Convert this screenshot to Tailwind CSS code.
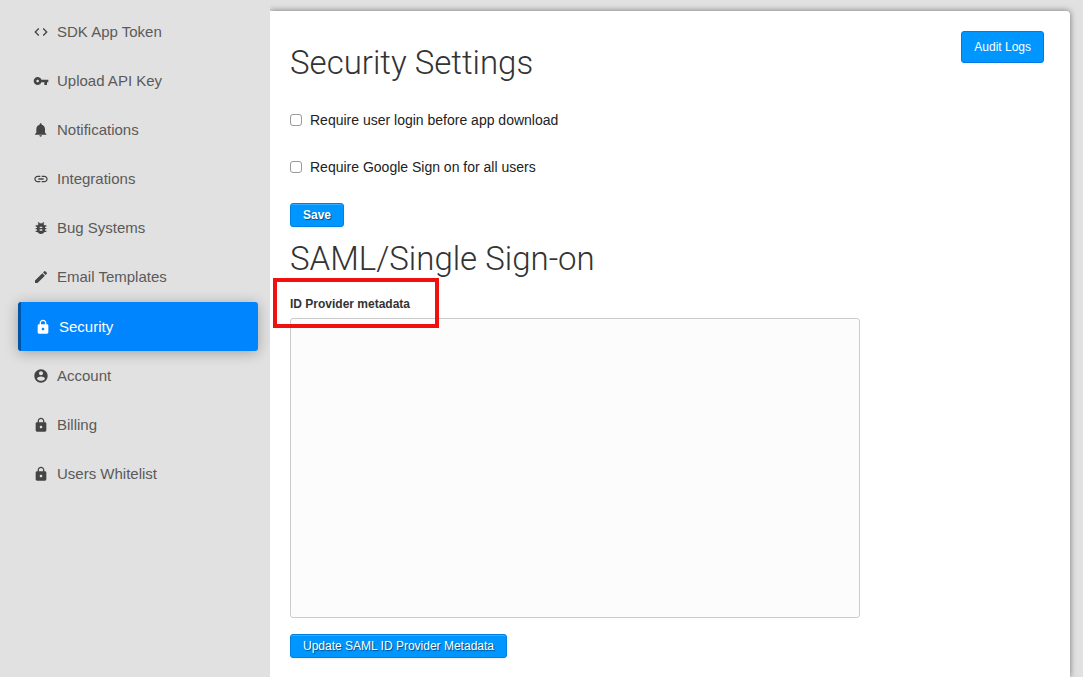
<!DOCTYPE html>
<html lang="en">
<head>
<meta charset="utf-8">
<meta name="viewport" content="width=device-width, initial-scale=1">
<title>Security Settings</title>
<script src="https://cdn.jsdelivr.net/npm/@tailwindcss/browser@4"></script>
</head>
<body class="bg-[#e1e1e1] font-['Liberation_Sans',Arial,sans-serif] text-[#333]">
<div class="flex min-h-screen overflow-hidden">
  <nav aria-label="Settings" class="z-10 w-[270px] shrink-0 overflow-hidden bg-[#e1e1e1] pt-[7px] pr-3 pl-[18px] text-[15px] leading-[25px] text-[#5a5a5a]">
    <a href="#" class="flex h-[49px] items-center gap-2 pl-[15px]"><svg class="size-4 fill-[#444]" viewBox="0 0 24 24" aria-hidden="true"><path d="M9.4 16.6 4.8 12l4.6-4.6L8 6l-6 6 6 6 1.4-1.4zm5.2 0 4.6-4.6-4.6-4.6L16 6l6 6-6 6-1.4-1.4z"/></svg>SDK App Token</a>
    <a href="#" class="flex h-[49px] items-center gap-2 pl-[15px]"><svg class="size-4 fill-[#444]" viewBox="0 0 24 24" aria-hidden="true"><path d="M12.65 10C11.83 7.67 9.61 6 7 6c-3.31 0-6 2.69-6 6s2.69 6 6 6c2.61 0 4.83-1.67 5.65-4H17v4h4v-4h2v-4H12.65zM7 14c-1.1 0-2-.9-2-2s.9-2 2-2 2 .9 2 2-.9 2-2 2z"/></svg>Upload API Key</a>
    <a href="#" class="flex h-[49px] items-center gap-2 pl-[15px]"><svg class="size-4 fill-[#444]" viewBox="0 0 24 24" aria-hidden="true"><path d="M11.5 22c1.1 0 2-.9 2-2h-4c0 1.1.9 2 2 2zm6.5-6v-5.5c0-3.07-2.13-5.64-5-6.32V3.5c0-.83-.67-1.5-1.500-1.500S10 2.67 10 3.5v.68c-2.87.68-5 3.25-5 6.320V16l-2 2v1h17v-1l-2-2z"/></svg>Notifications</a>
    <a href="#" class="flex h-[49px] items-center gap-2 pl-[15px]"><svg class="size-4 fill-[#444]" viewBox="0 0 24 24" aria-hidden="true"><path d="M3.9 12c0-1.71 1.39-3.1 3.1-3.1h4V7H7c-2.76 0-5 2.24-5 5s2.24 5 5 5h4v-1.900H7c-1.710 0-3.100-1.390-3.100-3.100zM8 13h8v-2H8v2zm9-6h-4v1.900h4c1.710 0 3.100 1.390 3.100 3.100s-1.390 3.100-3.100 3.100h-4V17h4c2.760 0 5-2.240 5-5s-2.240-5-5-5z"/></svg>Integrations</a>
    <a href="#" class="flex h-[49px] items-center gap-2 pl-[15px]"><svg class="size-4 fill-[#444]" viewBox="0 0 24 24" aria-hidden="true"><path d="M20 8h-2.810c-.45-.78-1.070-1.450-1.820-1.960L17 4.410 15.590 3l-2.170 2.170C12.960 5.060 12.490 5 12 5c-.49 0-.96.06-1.410.17L8.410 3 7 4.410l1.620 1.630C7.880 6.550 7.260 7.220 6.810 8H4v2h2.090c-.05.33-.09.66-.09 1v1H4v2h2v1c0 .34.04.67.09 1H4v2h2.810c1.040 1.790 2.970 3 5.190 3s4.150-1.210 5.190-3H20v-2h-2.090c.05-.33.09-.66.09-1v-1h2v-2h-2v-1c0-.34-.04-.67-.09-1H20V8zm-6 8h-4v-2h4v2zm0-4h-4v-2h4v2z"/></svg>Bug Systems</a>
    <a href="#" class="flex h-[49px] items-center gap-2 pl-[15px]"><svg class="size-4 fill-[#444]" viewBox="0 0 24 24" aria-hidden="true"><path d="M3 17.250V21h3.750L17.810 9.940l-3.750-3.750L3 17.250zM20.710 7.040c.39-.39.39-1.020 0-1.410l-2.340-2.340c-.39-.39-1.020-.39-1.410 0l-1.830 1.830 3.750 3.750 1.830-1.830z"/></svg>Email Templates</a>
    <a href="#" aria-current="page" class="mt-px flex h-[49px] items-center gap-2 rounded-[3px] border-l-3 border-[#0054a6] bg-[#0085ff] pl-3.5 text-white shadow-[0_2px_14px_rgba(0,0,0,0.28)]"><svg class="size-4 fill-white" viewBox="0 0 24 24" aria-hidden="true"><path d="M18 8h-1V6c0-2.760-2.240-5-5-5S7 3.240 7 6v2H6c-1.100 0-2 .9-2 2v10c0 1.100.9 2 2 2h12c1.100 0 2-.9 2-2V10c0-1.100-.9-2-2-2zm-6 9c-1.100 0-2-.9-2-2s.9-2 2-2 2 .9 2 2-.9 2-2 2zm3.100-9H8.900V6c0-1.710 1.390-3.100 3.100-3.100s3.100 1.390 3.100 3.100v2z"/></svg>Security</a>
    <a href="#" class="flex h-[49px] items-center gap-2 pl-[15px]"><svg class="size-4 fill-[#444]" viewBox="0 0 24 24" aria-hidden="true"><path d="M12 2C6.480 2 2 6.480 2 12s4.480 10 10 10 10-4.480 10-10S17.520 2 12 2zm0 3c1.660 0 3 1.340 3 3s-1.340 3-3 3-3-1.340-3-3 1.340-3 3-3zm0 14.200c-2.500 0-4.710-1.280-6-3.220.03-1.990 4-3.080 6-3.080 1.990 0 5.970 1.090 6 3.080-1.290 1.940-3.500 3.220-6 3.220z"/></svg>Account</a>
    <a href="#" class="flex h-[49px] items-center gap-2 pl-[15px]"><svg class="size-4 fill-[#444]" viewBox="0 0 24 24" aria-hidden="true"><path d="M18 8h-1V6c0-2.760-2.240-5-5-5S7 3.240 7 6v2H6c-1.100 0-2 .9-2 2v10c0 1.100.9 2 2 2h12c1.100 0 2-.9 2-2V10c0-1.100-.9-2-2-2zm-6 9c-1.100 0-2-.9-2-2s.9-2 2-2 2 .9 2 2-.9 2-2 2zm3.100-9H8.900V6c0-1.710 1.390-3.100 3.100-3.100s3.100 1.390 3.100 3.100v2z"/></svg>Billing</a>
    <a href="#" class="flex h-[49px] items-center gap-2 pl-[15px]"><svg class="size-4 fill-[#444]" viewBox="0 0 24 24" aria-hidden="true"><path d="M18 8h-1V6c0-2.760-2.240-5-5-5S7 3.240 7 6v2H6c-1.100 0-2 .9-2 2v10c0 1.100.9 2 2 2h12c1.100 0 2-.9 2-2V10c0-1.100-.9-2-2-2zm-6 9c-1.100 0-2-.9-2-2s.9-2 2-2 2 .9 2 2-.9 2-2 2zm3.100-9H8.900V6c0-1.710 1.390-3.100 3.100-3.100s3.100 1.390 3.100 3.100v2z"/></svg>Users Whitelist</a>
  </nav>
  <main class="mt-[11px] mr-[13px] min-w-0 grow rounded-tr-[4px] bg-white px-5 pt-5 shadow-[0_0_6px_rgba(0,0,0,0.5)]">
    <div class="flex items-start justify-between pr-1.5">
      <h1 class="pt-3 font-['Roboto',sans-serif] text-[33px] leading-10 font-light">Security Settings</h1>
      <button type="button" class="h-8 rounded-[3px] border border-[#0078e7] bg-[#0096ff] px-3 text-xs text-white">Audit Logs</button>
    </div>
    <form>
      <label class="mt-[27px] flex h-5 items-center gap-2 text-sm text-[#222]"><input type="checkbox" class="size-3 appearance-none rounded-[3px] border border-[#999] bg-white checked:bg-[#0096ff]">Require user login before app download</label>
      <label class="mt-[27px] flex h-5 items-center gap-2 text-sm text-[#222]"><input type="checkbox" class="size-3 appearance-none rounded-[3px] border border-[#999] bg-white checked:bg-[#0096ff]">Require Google Sign on for all users</label>
      <button type="button" class="mt-[26px] block h-6 rounded-[3px] border border-[#0080e0] bg-[#0096ff] px-3 text-xs leading-none font-bold text-white shadow-[inset_0_1px_0_rgba(255,255,255,0.2),0_1px_2px_rgba(0,0,0,0.08)] text-shadow-[1px_1px_1px_rgba(0,0,0,0.5)]">Save</button>
    </form>
    <form>
      <h2 class="mt-3 font-['Roboto',sans-serif] text-[33px] leading-10 font-light">SAML/Single Sign-on</h2>
      <div class="relative mt-[15px] flex">
        <label for="metadata" class="text-xs leading-5 font-bold">ID Provider metadata</label>
        <div aria-hidden="true" class="pointer-events-none absolute -top-4 -left-[17px] h-[50px] w-[166px] border-4 border-[#f01010]"></div>
      </div>
      <textarea id="metadata" class="mt-1 block h-[300px] w-full max-w-[570px] resize-none rounded-[3px] border border-[#ccc] bg-[#fcfcfc] p-2 text-sm"></textarea>
      <button type="button" class="mt-4 block h-6 rounded-[3px] border border-[#0080e0] bg-[#0096ff] px-3 text-xs leading-none text-white shadow-[inset_0_1px_0_rgba(255,255,255,0.2),0_1px_2px_rgba(0,0,0,0.08)] text-shadow-[1px_1px_1px_rgba(0,0,0,0.5)]">Update SAML ID Provider Metadata</button>
    </form>
  </main>
</div>
</body>
</html>
